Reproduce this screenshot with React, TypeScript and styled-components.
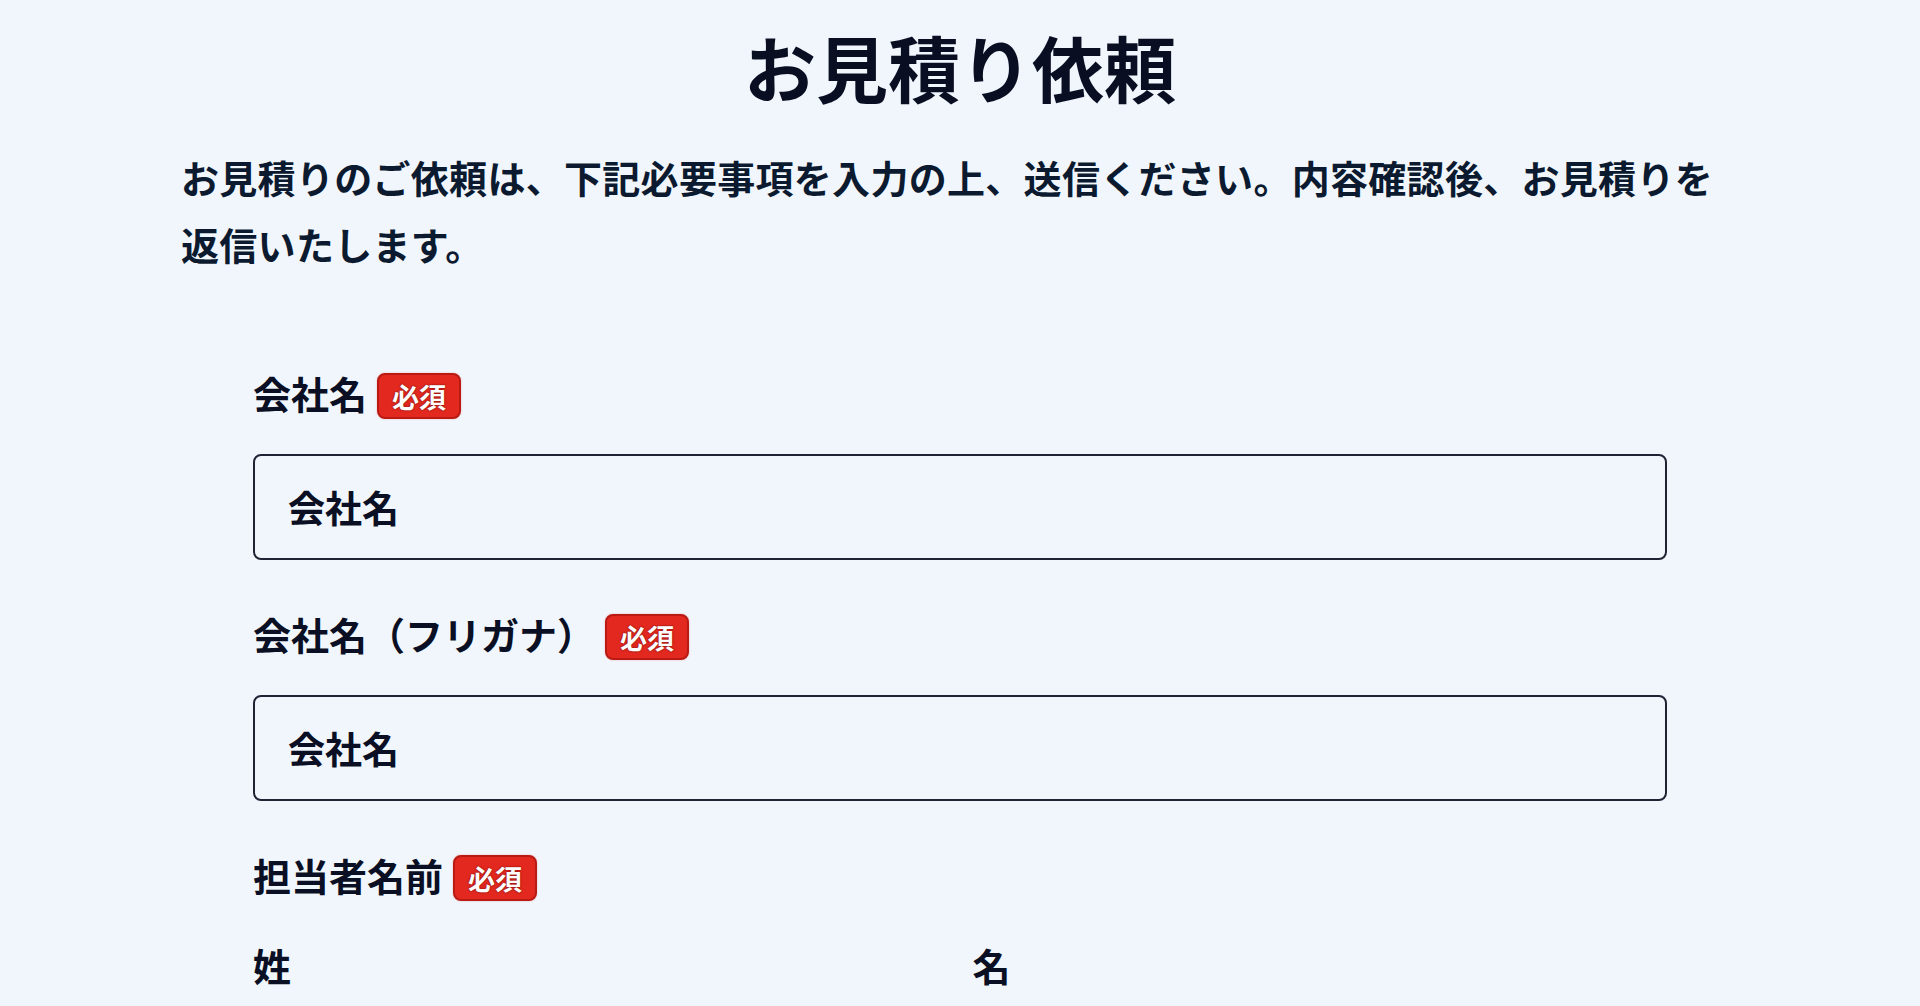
import React from 'react';
import styled, { createGlobalStyle } from 'styled-components';

const GlobalStyle = createGlobalStyle`
  * {
    box-sizing: border-box;
  }
  body {
    margin: 0;
    background: #f1f6fd;
    font-family: 'Noto Sans CJK JP', 'Noto Sans', sans-serif;
    color: #0a0f24;
  }
`;

const fields = [
  { id: 'company', label: '会社名', placeholder: '会社名' },
  { id: 'companyKana', label: '会社名（フリガナ）', placeholder: '会社名' },
];

const App = () => {
  return (
    <>
      <GlobalStyle />
      <Page>
        <Title>お見積り依頼</Title>
        <Lead>
          お見積りのご依頼は、下記必要事項を入力の上、送信ください。内容確認後、お見積りを返信いたします。
        </Lead>
        <Form onSubmit={(e) => e.preventDefault()}>
          {fields.map((field) => (
            <Field key={field.id}>
              <LabelRow htmlFor={field.id}>
                <LabelText>{field.label}</LabelText>
                <Required>必須</Required>
              </LabelRow>
              <Input id={field.id} type="text" placeholder={field.placeholder} />
            </Field>
          ))}
          <Field>
            <LabelRow as="div">
              <LabelText>担当者名前</LabelText>
              <Required>必須</Required>
            </LabelRow>
            <NameGrid>
              <NameColumn>
                <SubLabel htmlFor="lastName">姓</SubLabel>
                <Input id="lastName" type="text" placeholder="山田" />
              </NameColumn>
              <NameColumn>
                <SubLabel htmlFor="firstName">名</SubLabel>
                <Input id="firstName" type="text" placeholder="太郎" />
              </NameColumn>
            </NameGrid>
          </Field>
        </Form>
      </Page>
    </>
  );
};

const Page = styled.main`
  width: 1558px;
  margin: 0 auto;
  padding-top: 23px;
`;

const Title = styled.h1`
  margin: 0;
  font-size: 72px;
  font-weight: 700;
  line-height: 86px;
  text-align: center;
  color: #0a0e22;
`;

const Lead = styled.p`
  margin: 34px 16px 0 0;
  font-size: 38px;
  font-weight: 700;
  line-height: 67px;
  letter-spacing: 0.3px;
  color: #0c1a30;
`;

const Form = styled.form`
  display: flex;
  flex-direction: column;
  gap: 50px;
  margin-top: 92px;
  padding: 0 72px;
`;

const Field = styled.div`
  display: flex;
  flex-direction: column;
  gap: 37px;
`;

const LabelRow = styled.label`
  display: flex;
  align-items: center;
  gap: 10px;
  height: 48px;
`;

const LabelText = styled.span`
  font-size: 38px;
  font-weight: 700;
  line-height: 48px;
  color: #0a0f24;
`;

const Required = styled.span`
  display: inline-flex;
  align-items: center;
  justify-content: center;
  height: 46px;
  margin-top: 6px;
  padding: 0 13px;
  border: 2px solid #b91a13;
  border-radius: 8px;
  background: #e2281f;
  color: #fff;
  font-size: 27px;
  font-weight: 700;
  line-height: 1;
  text-shadow: 0 0 2px rgba(90, 0, 0, 0.9);
  box-shadow: 0 0 2px rgba(230, 60, 50, 0.4);
`;

const Input = styled.input`
  width: 100%;
  height: 106px;
  padding: 0 33px;
  border: 2px solid #1e2434;
  border-radius: 8px;
  background: transparent;
  font-family: inherit;
  font-size: 37px;
  font-weight: 700;
  color: #0a0f24;
  outline: none;

  &::placeholder {
    color: #0a0f24;
    opacity: 1;
  }
`;

const NameGrid = styled.div`
  display: grid;
  grid-template-columns: 1fr 1fr;
  gap: 25px;
  margin-top: 5px;
`;

const NameColumn = styled.div`
  display: flex;
  flex-direction: column;
  gap: 37px;
`;

const SubLabel = styled.label`
  font-size: 38px;
  font-weight: 700;
  line-height: 48px;
  color: #0a0f24;
`;

export default App;
